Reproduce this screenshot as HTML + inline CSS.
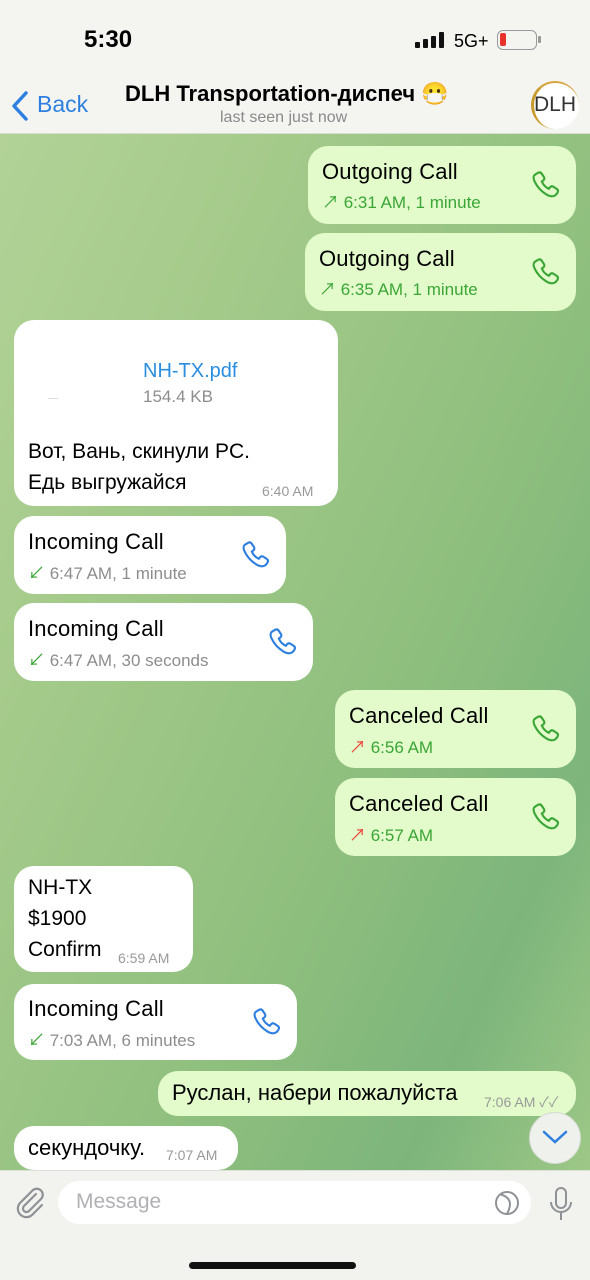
<!DOCTYPE html><html><head><meta charset="utf-8"><style>
*{margin:0;padding:0;box-sizing:border-box}
body{width:590px;height:1280px;overflow:hidden;position:relative;font-family:"Liberation Sans","Noto Sans CJK SC",sans-serif;background:linear-gradient(115deg,#b5d49a 0%,#a4ca8a 30%,#8fbf7e 60%,#7db57b 80%,#a6cd8a 100%)}
.a{position:absolute}
.b{position:absolute;border-radius:20px;background:#fff}
.o{background:#e3fbca}
.t{position:absolute;font-size:21px;color:#000;white-space:nowrap}
.h{font-size:22px;letter-spacing:0.2px}
.s{position:absolute;font-size:17px;color:#8d8d8d;white-space:nowrap}
.g{color:#3aa636}
.tm{position:absolute;font-size:14px;color:#999;white-space:nowrap}
.ph{position:absolute;width:32px;height:32px}
</style></head><body>
<div class="a" style="left:0;top:0;width:590px;height:134px;background:#f4f5f1;border-bottom:1px solid #d8dcd2"></div>
<div class="t" style="left:84px;top:26px;font-size:24px;font-weight:bold">5:30</div>
<div class="a" style="left:415px;top:32px;width:32px;height:18px">
<div class="a" style="left:0;top:10px;width:5px;height:6px;background:#111;border-radius:1px"></div>
<div class="a" style="left:8px;top:7px;width:5px;height:9px;background:#111;border-radius:1px"></div>
<div class="a" style="left:16px;top:4px;width:5px;height:12px;background:#111;border-radius:1px"></div>
<div class="a" style="left:24px;top:0;width:5px;height:16px;background:#111;border-radius:1px"></div>
</div>
<div class="t" style="left:454px;top:31px;font-size:18px">5G+</div>
<div class="a" style="left:497px;top:30px;width:40px;height:20px;border:1.5px solid #999;border-radius:6px"><div class="a" style="left:2px;top:2px;width:6px;height:13px;background:#e8322c;border-radius:2px"></div></div>
<div class="a" style="left:538px;top:36px;width:3px;height:7px;background:#999;border-radius:1px"></div>
<svg class="a" style="left:10px;top:90px" width="20" height="32" viewBox="0 0 20 32"><path d="M16 3L4 16l12 13" fill="none" stroke="#2d7fe0" stroke-width="3.5" stroke-linecap="round" stroke-linejoin="round"/></svg>
<div class="t" style="left:37px;top:91px;font-size:23px;color:#2d7fe0">Back</div>
<div class="t" style="left:125px;top:81px;font-size:22px;font-weight:bold">DLH Transportation-диспеч 😷</div>
<div class="s" style="left:220px;top:109px;font-size:16px;color:#8a8a8a">last seen just now</div>
<div class="a" style="left:531px;top:81px;width:48px;height:48px;border-radius:50%;background:#fff;border-left:3px solid #c99a2e;border-top:2px solid #d7a640"></div>
<div class="t" style="left:534px;top:93px;font-size:21px;color:#333">DLH</div>

<div class="b o" style="left:308px;top:146px;width:268px;height:78px"></div>
<div class="t h" style="left:322px;top:159px">Outgoing Call</div>
<div class="s g" style="left:322px;top:188px">↗ 6:31 AM, 1 minute</div>
<div class="b o" style="left:305px;top:233px;width:271px;height:78px"></div>
<div class="t h" style="left:319px;top:246px">Outgoing Call</div>
<div class="s g" style="left:319px;top:275px">↗ 6:35 AM, 1 minute</div>

<div class="b" style="left:14px;top:320px;width:324px;height:186px"></div>
<div class="s" style="left:143px;top:360px;font-size:20px;color:#2a8ee0">NH-TX.pdf</div>
<div class="s" style="left:143px;top:387px">154.4 KB</div>
<div class="a" style="left:48px;top:398px;width:10px;height:1px;background:#ddd"></div>
<div class="t" style="left:28px;top:440px">Вот, Вань, скинули PC.</div>
<div class="t" style="left:28px;top:471px">Едь выгружайся</div>
<div class="tm" style="left:262px;top:483px">6:40 AM</div>

<div class="b" style="left:14px;top:516px;width:272px;height:78px"></div>
<div class="t h" style="left:28px;top:529px">Incoming Call</div>
<div class="s" style="left:28px;top:559px"><span class="g">↙</span> 6:47 AM, 1 minute</div>
<div class="b" style="left:14px;top:603px;width:299px;height:78px"></div>
<div class="t h" style="left:28px;top:616px">Incoming Call</div>
<div class="s" style="left:28px;top:646px"><span class="g">↙</span> 6:47 AM, 30 seconds</div>

<div class="b o" style="left:335px;top:690px;width:241px;height:78px"></div>
<div class="t h" style="left:349px;top:703px">Canceled Call</div>
<div class="s g" style="left:349px;top:733px"><span style="color:#e8443a">↗</span> 6:56 AM</div>
<div class="b o" style="left:335px;top:778px;width:241px;height:78px"></div>
<div class="t h" style="left:349px;top:791px">Canceled Call</div>
<div class="s g" style="left:349px;top:821px"><span style="color:#e8443a">↗</span> 6:57 AM</div>

<div class="b" style="left:14px;top:866px;width:179px;height:106px"></div>
<div class="t" style="left:28px;top:876px">NH-TX</div>
<div class="t" style="left:28px;top:907px">$1900</div>
<div class="t" style="left:28px;top:938px">Confirm</div>
<div class="tm" style="left:118px;top:950px">6:59 AM</div>

<div class="b" style="left:14px;top:984px;width:283px;height:76px"></div>
<div class="t h" style="left:28px;top:996px">Incoming Call</div>
<div class="s" style="left:28px;top:1026px"><span class="g">↙</span> 7:03 AM, 6 minutes</div>

<div class="b o" style="left:158px;top:1071px;width:418px;height:45px"></div>
<div class="t" style="left:172px;top:1080px;font-size:22px">Руслан, набери пожалуйста</div>
<div class="tm g" style="left:484px;top:1092px">7:06 AM ✓✓</div>

<div class="b" style="left:14px;top:1126px;width:224px;height:44px"></div>
<div class="t" style="left:28px;top:1135px;font-size:22px">секундочку.</div>
<div class="tm" style="left:166px;top:1147px">7:07 AM</div>

<div class="a" style="left:529px;top:1112px;width:52px;height:52px;border-radius:50%;background:#eef1ec;border:1px solid #d5dad0"></div>
<svg class="a" style="left:541px;top:1128px" width="28" height="18" viewBox="0 0 28 18"><path d="M3 4l11 10L25 4" fill="none" stroke="#2d7fe0" stroke-width="2.5" stroke-linecap="round"/></svg>

<svg width="0" height="0" style="position:absolute"><defs><path id="p" d="M7 3c1.5-1 3-1 4 .5l2 3c.8 1.3.5 2.6-.7 3.4l-1.2.9c1.2 3 3.6 5.5 6.6 6.8l.9-1.2c.9-1.2 2.2-1.5 3.4-.7l3 2c1.5 1 1.5 2.5.5 4l-1.5 1.8C22 25 19 25 15.5 23 10.5 20 6.5 15.5 4.2 10.5 2.8 7.5 3.3 5 5.2 4z"/></defs></svg>
<svg class="ph" style="left:530px;top:170px" viewBox="0 0 30 30"><use href="#p" fill="none" stroke="#3aa636" stroke-width="2"/></svg>
<svg class="ph" style="left:530px;top:257px" viewBox="0 0 30 30"><use href="#p" fill="none" stroke="#3aa636" stroke-width="2"/></svg>
<svg class="ph" style="left:240px;top:540px" viewBox="0 0 30 30"><use href="#p" fill="none" stroke="#2d7fe0" stroke-width="2"/></svg>
<svg class="ph" style="left:267px;top:627px" viewBox="0 0 30 30"><use href="#p" fill="none" stroke="#2d7fe0" stroke-width="2"/></svg>
<svg class="ph" style="left:530px;top:714px" viewBox="0 0 30 30"><use href="#p" fill="none" stroke="#3aa636" stroke-width="2"/></svg>
<svg class="ph" style="left:530px;top:802px" viewBox="0 0 30 30"><use href="#p" fill="none" stroke="#3aa636" stroke-width="2"/></svg>
<svg class="ph" style="left:251px;top:1007px" viewBox="0 0 30 30"><use href="#p" fill="none" stroke="#2d7fe0" stroke-width="2"/></svg>

<div class="a" style="left:0;top:1170px;width:590px;height:110px;background:#f2f3ef;border-top:1px solid #dde0d8"></div>
<svg class="a" style="left:14px;top:1185px" width="32" height="34" viewBox="0 0 32 34"><path d="M22 9L10 21a3.5 3.5 0 005 5L27 14a6 6 0 00-8.5-8.5L6 18a8.5 8.5 0 0012 12l10-10" fill="none" stroke="#8e9196" stroke-width="2.2" stroke-linecap="round"/></svg>
<div class="a" style="left:58px;top:1181px;width:473px;height:43px;border-radius:22px;background:#fff"></div>
<div class="s" style="left:76px;top:1190px;font-size:21px;color:#b0b0b5">Message</div>
<svg class="a" style="left:492px;top:1188px" width="30" height="30" viewBox="0 0 30 30"><circle cx="15" cy="15" r="11" fill="none" stroke="#8e9196" stroke-width="2"/><path d="M9 7c4 0 9 4 9 9 0 3-1 6-3 10" fill="none" stroke="#8e9196" stroke-width="2"/></svg>
<svg class="a" style="left:546px;top:1186px" width="30" height="36" viewBox="0 0 30 36"><rect x="10" y="2" width="10" height="20" rx="5" fill="none" stroke="#8e9196" stroke-width="2"/><path d="M5 16a10 10 0 0020 0M15 26v8" fill="none" stroke="#8e9196" stroke-width="2"/></svg>
<div class="a" style="left:189px;top:1262px;width:167px;height:7px;border-radius:4px;background:#111"></div>
</body></html>
